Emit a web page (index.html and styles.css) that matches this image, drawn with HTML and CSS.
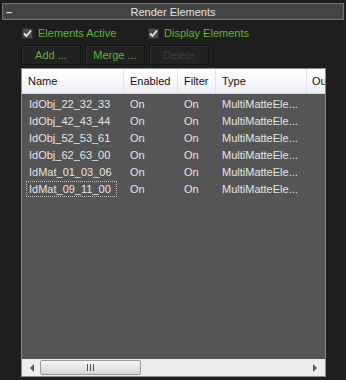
FILE: index.html
```html
<!DOCTYPE html>
<html lang="en">
<head>
<meta charset="UTF-8">
<title>Render Elements</title>
<link rel="stylesheet" href="styles.css">
</head>
<body>
<div class="rollout">
  <div class="title"><span class="minus">–</span><span class="caption">Render Elements</span></div>
  <div class="checks">
    <label class="chk"><span class="box"><svg width="9" height="9" viewBox="0 0 9 9"><path d="M1 4.5 L3.5 7 L8 1.5" fill="none" stroke="#e6e6e6" stroke-width="1.8"/></svg></span>Elements Active</label>
    <label class="chk second"><span class="box"><svg width="9" height="9" viewBox="0 0 9 9"><path d="M1 4.5 L3.5 7 L8 1.5" fill="none" stroke="#e6e6e6" stroke-width="1.8"/></svg></span>Display Elements</label>
  </div>
  <div class="buttons">
    <button class="btn">Add ...</button>
    <button class="btn">Merge ...</button>
    <button class="btn off">Delete</button>
  </div>
  <div class="list">
    <div class="head">
      <div class="col c-name">Name</div>
      <div class="col c-en">Enabled</div>
      <div class="col c-fi">Filter</div>
      <div class="col c-ty">Type</div>
      <div class="col c-out">Ou</div>
    </div>
    <div class="rows">
      <div class="row"><div class="c-name"><span>IdObj_22_32_33</span></div><div class="c-en">On</div><div class="c-fi">On</div><div class="c-ty">MultiMatteEle...</div></div>
      <div class="row"><div class="c-name"><span>IdObj_42_43_44</span></div><div class="c-en">On</div><div class="c-fi">On</div><div class="c-ty">MultiMatteEle...</div></div>
      <div class="row"><div class="c-name"><span>IdObj_52_53_61</span></div><div class="c-en">On</div><div class="c-fi">On</div><div class="c-ty">MultiMatteEle...</div></div>
      <div class="row"><div class="c-name"><span>IdObj_62_63_00</span></div><div class="c-en">On</div><div class="c-fi">On</div><div class="c-ty">MultiMatteEle...</div></div>
      <div class="row"><div class="c-name"><span>IdMat_01_03_06</span></div><div class="c-en">On</div><div class="c-fi">On</div><div class="c-ty">MultiMatteEle...</div></div>
      <div class="row"><div class="c-name"><span class="focus">IdMat_09_11_00</span></div><div class="c-en">On</div><div class="c-fi">On</div><div class="c-ty">MultiMatteEle...</div></div>
    </div>
    <div class="hscroll">
      <span class="arrow left"></span>
      <div class="track">
        <div class="thumb"><span class="grip"></span></div>
      </div>
      <span class="arrow right"></span>
    </div>
  </div>
</div>
</body>
</html>
```
FILE: styles.css
```css
* {
  margin: 0;
  padding: 0;
  box-sizing: border-box;
}
body {
  width: 346px;
  height: 380px;
  background: #1e1e1e;
  font-family: "Liberation Sans", Arial, sans-serif;
  font-size: 11px;
  overflow: hidden;
}
.rollout {
  padding: 3px 2px 0 2px;
}
.title {
  height: 17px;
  border: 1px solid #707070;
  background: #444;
  box-shadow: inset 0 0 0 1px #4c4c4c;
  display: flex;
  align-items: center;
  color: #e2e2e2;
  font-size: 11px;
}
.minus {
  width: 14px;
  padding-left: 3px;
  font-weight: bold;
}
.caption {
  flex: 1;
  text-align: center;
  padding-right: 14px;
}
.checks {
  display: flex;
  height: 12px;
  margin: 7px 0 0 20px;
}
.chk {
  display: flex;
  align-items: center;
  color: #5cb52e;
  width: 126px;
}
.box {
  width: 11px;
  height: 11px;
  background: #4a4a4a;
  border: 1px solid #2a2a2a;
  display: flex;
  align-items: center;
  justify-content: center;
  margin-right: 5px;
}
.buttons {
  display: flex;
  gap: 4px;
  margin: 6px 0 0 19px;
}
.btn {
  width: 60px;
  height: 20px;
  background: #222;
  border: 1px solid #141414;
  box-shadow: inset 1px 1px 0 #2e2e2e;
  color: #5cb52e;
  font-family: "Liberation Sans", Arial, sans-serif;
  font-size: 11px;
}
.btn.off {
  color: #3c3c3c;
}
.list {
  margin: 3px 0 0 19px;
  width: 305px;
  height: 309px;
  border: 1px solid #8a8a90;
  background: #555;
  display: flex;
  flex-direction: column;
}
.head {
  height: 25px;
  display: flex;
  background: linear-gradient(#ffffff, #f7f8fa 50%, #eceef1);
  border-bottom: 1px solid #d6d8dc;
  color: #111;
  overflow: hidden;
}
.head .col {
  line-height: 24px;
  padding-left: 6px;
  border-right: 1px solid #e2e3e5;
  flex: none;
}
.head .c-out {
  border-right: none;
  padding-left: 5px;
}
.c-name { width: 102px; }
.c-en { width: 54px; }
.c-fi { width: 38px; }
.c-ty { width: 91px; }
.c-out { width: 40px; }
.rows {
  flex: 1;
  padding-top: 2px;
  color: #e4e4e4;
}
.row {
  display: flex;
  height: 17px;
  line-height: 17px;
}
.row > div {
  padding-left: 6px;
  white-space: nowrap;
}
.row .c-name {
  padding-left: 4px;
}
.row .c-name span {
  padding: 0 5px 0 2px;
  display: inline-block;
  line-height: 14px;
  border: 1px solid transparent;
}
.row .c-name .focus {
  border: 1px dotted #bbb;
}
.hscroll {
  height: 17px;
  background: #ececec;
  display: flex;
  align-items: center;
}
.arrow {
  width: 18px;
  height: 17px;
  position: relative;
  flex: none;
}
.arrow::after {
  content: "";
  position: absolute;
  top: 5px;
  border-top: 4px solid transparent;
  border-bottom: 4px solid transparent;
}
.arrow.left::after {
  left: 8px;
  border-right: 4px solid #555;
}
.arrow.right::after {
  left: 6px;
  border-left: 4px solid #555;
}
.track {
  flex: 1;
  height: 15px;
}
.thumb {
  width: 101px;
  height: 15px;
  border: 1px solid #9a9a9a;
  border-radius: 2px;
  background: linear-gradient(#f6f6f6, #e6e6e6 50%, #d6d6d6);
  display: flex;
  align-items: center;
  justify-content: center;
}
.grip {
  width: 7px;
  height: 7px;
  background: repeating-linear-gradient(90deg, #555 0 1px, transparent 1px 3px);
}
```
